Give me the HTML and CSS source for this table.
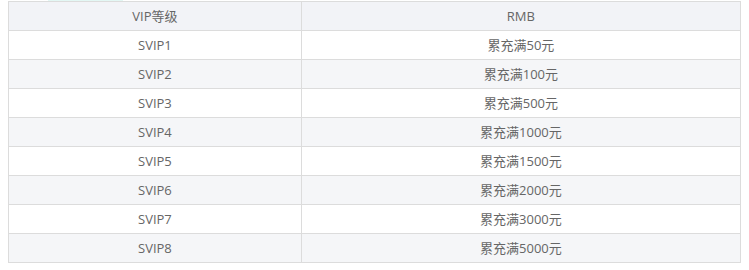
FILE: index.html
```html
<!DOCTYPE html>
<html lang="zh-CN">
<head>
<meta charset="utf-8">
<title>VIP等级</title>
<link rel="stylesheet" href="styles.css">
</head>
<body>
<div class="page">
  <div class="tab-glow"></div>
  <table class="vip-table">
    <thead>
      <tr><th class="col-level">VIP等级</th><th class="col-rmb">RMB</th></tr>
    </thead>
    <tbody>
      <tr><td>SVIP1</td><td>累充满50元</td></tr>
      <tr><td>SVIP2</td><td>累充满100元</td></tr>
      <tr><td>SVIP3</td><td>累充满500元</td></tr>
      <tr><td>SVIP4</td><td>累充满1000元</td></tr>
      <tr><td>SVIP5</td><td>累充满1500元</td></tr>
      <tr><td>SVIP6</td><td>累充满2000元</td></tr>
      <tr><td>SVIP7</td><td>累充满3000元</td></tr>
      <tr><td>SVIP8</td><td>累充满5000元</td></tr>
    </tbody>
  </table>
</div>
</body>
</html>
```
FILE: styles.css
```css
html, body {
  margin: 0;
  padding: 0;
  background: #ffffff;
}
.page {
  padding: 0 8px;
  font-family: "Open Sans", "Noto Sans CJK SC", sans-serif;
  font-size: 13px;
  color: #666666;
}
.tab-glow {
  height: 1px;
  width: 75px;
  margin-left: 40px;
  background: #e3f7f4;
}
.vip-table {
  width: 100%;
  border-collapse: collapse;
  table-layout: fixed;
}
.vip-table th,
.vip-table td {
  border: 1px solid #dcdcdc;
  height: 28px;
  padding: 0;
  text-align: center;
  font-weight: normal;
  line-height: 28px;
  box-sizing: border-box;
}
.vip-table th,
.vip-table td { height: 29px; }
.col-level { width: 40%; }
.col-rmb { width: 60%; }
.vip-table thead tr { background: #f2f3f7; }
.vip-table tbody tr:nth-child(even) { background: #f5f6f8; }
.vip-table tbody tr:nth-child(odd) { background: #ffffff; }
```
